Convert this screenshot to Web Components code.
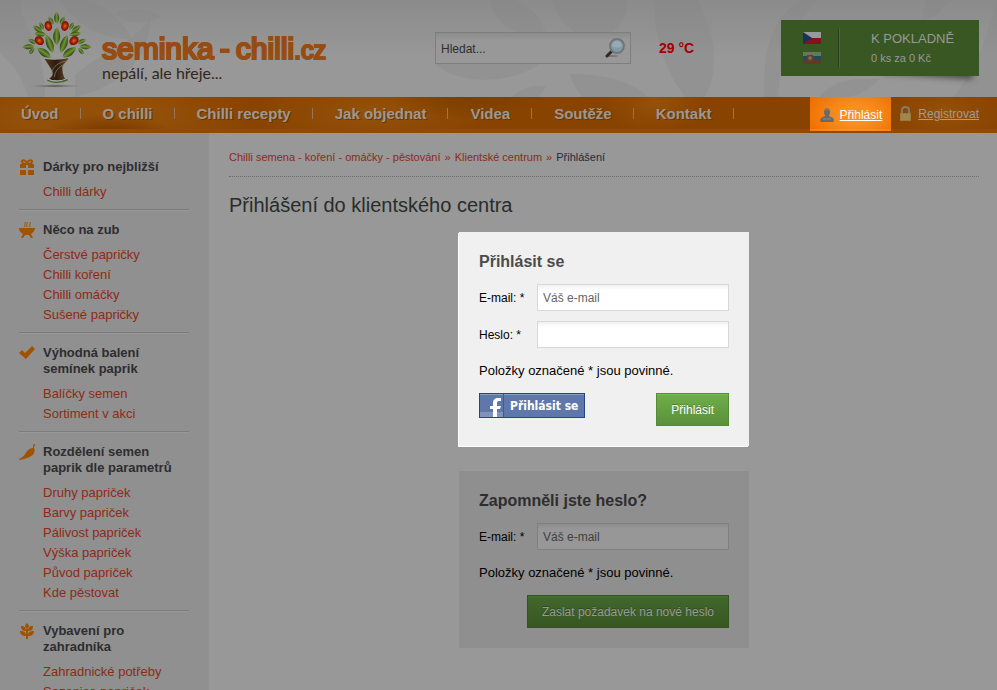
<!DOCTYPE html>
<html lang="cs">
<head>
<meta charset="utf-8">
<title>Přihlášení - seminka-chilli.cz</title>
<style>
	:root{
		--page: #989898;
		--side: #909090;
		--orange: #984f00;
		--link: #8f2a14;
		--text: #2e2e2e;
		--muted: #999;
	}
	body{
		margin: 0;
		background: var(--page);
		color: var(--text);
		font: 12px/16px "Liberation Sans", Arial, sans-serif;
	}
	.columns{
		display: flex;
		align-items: stretch;
	}
</style>
</head>
<body>

<shop-header></shop-header>
<shop-nav>
	<a href="#uvod">Úvod</a>
	<a href="#o-chilli">O chilli</a>
	<a href="#recepty">Chilli recepty</a>
	<a href="#objednat">Jak objednat</a>
	<a href="#videa">Videa</a>
	<a href="#souteze">Soutěže</a>
	<a href="#kontakt">Kontakt</a>
</shop-nav>

<div class="columns">
	<shop-sidebar>
		<menu-group icon="gift" heading="Dárky pro nejbližší">
			<a href="#1">Chilli dárky</a>
		</menu-group>
		<menu-group icon="bowl" heading="Něco na zub">
			<a href="#2">Čerstvé papričky</a>
			<a href="#3">Chilli koření</a>
			<a href="#4">Chilli omáčky</a>
			<a href="#5">Sušené papričky</a>
		</menu-group>
		<menu-group icon="check" heading="Výhodná balení semínek paprik">
			<a href="#6">Balíčky semen</a>
			<a href="#7">Sortiment v akci</a>
		</menu-group>
		<menu-group icon="pepper" heading="Rozdělení semen paprik dle parametrů">
			<a href="#8">Druhy papriček</a>
			<a href="#9">Barvy papriček</a>
			<a href="#10">Pálivost papriček</a>
			<a href="#11">Výška papriček</a>
			<a href="#12">Původ papriček</a>
			<a href="#13">Kde pěstovat</a>
		</menu-group>
		<menu-group icon="plant" heading="Vybavení pro zahradníka">
			<a href="#14">Zahradnické potřeby</a>
			<a href="#15">Sazenice papriček</a>
		</menu-group>
	</shop-sidebar>

	<page-content heading="Přihlášení do klientského centra">
		<bread-crumbs slot="crumbs">
			<a href="#home">Chilli semena - koření - omáčky - pěstování</a>
			<a href="#centrum">Klientské centrum</a>
			<span slot="current">Přihlášení</span>
		</bread-crumbs>
		<form-panel heading="Přihlásit se" active>
			<text-field label="E-mail: *" type="email" placeholder="Váš e-mail"></text-field>
			<text-field label="Heslo: *" type="password"></text-field>
			<facebook-button slot="actions">Přihlásit se</facebook-button>
			<green-button slot="actions">Přihlásit</green-button>
		</form-panel>
		<form-panel heading="Zapomněli jste heslo?">
			<text-field label="E-mail: *" type="email" placeholder="Váš e-mail"></text-field>
			<green-button slot="actions">Zaslat požadavek na nové heslo</green-button>
		</form-panel>
	</page-content>
</div>

<template id="shop-header">
	<style>
		:host{
			display: block;
			position: relative;
			isolation: isolate;
			background: linear-gradient(#8b8b8b, #989898 60%);
		}
		.backdrop{
			position: absolute;
			inset: 0;
			width: 100%;
			height: 100%;
			z-index: -1;
		}
		header{
			display: flex;
			align-items: center;
			min-height: 97px;
			padding: 0 18px 1px 22px;
			box-sizing: border-box;
		}
		.logo{
			display: flex;
			align-items: center;
			gap: 10px;
			flex: 0 0 413px;
			color: #34261a;
			text-decoration: none;
		}
		.logo svg{ width: 70px; height: 80px }
		.words{
			display: flex;
			flex-direction: column;
			padding-top: 18px;
		}
		.name{
			display: flex;
			gap: 6px;
			align-items: baseline;
			font-size: 30px;
			line-height: 30px;
			color: transparent;
			background: linear-gradient(#963a08 20%, #9b6226 90%);
			-webkit-background-clip: text;
			background-clip: text;
			-webkit-text-stroke: 2px #974c13;
		}
		.name small{ font-size: 25px }
		.tagline{
			font: 16px/16px Lato, sans-serif;
		}
		form{
			display: flex;
			align-items: center;
			width: 196px;
			height: 32px;
			box-sizing: border-box;
			border: 1px solid #7e7e7e;
			background: linear-gradient(#8b8b8b, #989898 7px);
		}
		input{
			flex: 1;
			min-width: 0;
			border: 0;
			padding: 2px 5px 0;
			background: none;
			font: inherit;
			color: var(--text);
		}
		input::placeholder{ color: var(--text); opacity: 1 }
		form button{
			border: 0;
			padding: 0 5px 0 0;
			background: none;
			height: 20px;
		}
		.temp{
			margin-left: 28px;
			font-size: 14px;
			color: #a50000;
		}
		.cart{
			display: flex;
			align-items: center;
			position: relative;
			width: 198px;
			height: 56px;
			margin-left: auto;
			box-sizing: border-box;
			padding-left: 22px;
			background: #385723;
		}
		.cart::after{
			content: "";
			position: absolute;
			right: 6px;
			bottom: 4px;
			width: 90px;
			height: 10px;
			z-index: -1;
			transform: rotate(4deg);
			box-shadow: 0 4px 6px #444;
		}
		.flags{
			display: flex;
			flex-direction: column;
			gap: 8px;
			padding-right: 17px;
		}
		.flags a, .flags svg{ display: block }
		.sum{
			display: flex;
			flex-direction: column;
			justify-content: center;
			gap: 3px;
			height: 40px;
			padding-left: 32px;
			border-left: 1px solid #29411a;
			box-shadow: inset 1px 0 #4c6a39;
			color: var(--muted);
			text-decoration: none;
			font-size: 11px;
		}
		.sum b{ font-size: 13px; font-weight: normal }
	</style>
	<svg class="backdrop" viewBox="0 0 997 97" preserveAspectRatio="xMidYMin slice" fill="#858585" fill-opacity=".28" aria-hidden="true">
		<path d="M0 0h20c0 30 25 38 25 97H28C18 60 0 60 0 50z"/>
		<path d="M60 0c20 30 40 36 72 40-10-22-30-38-50-40z"/>
		<path d="M115 14c12-8 34-6 46 2-12 8-34 10-46-2z"/>
		<path d="M75 75c20-20 50-25 75-55 0 35-25 65-75 77z"/>
		<path d="M490 0c4 22 20 36 56 38C545 20 530 4 510 0z"/>
		<path d="M552 0c5 18 16 30 34 38 20 0 42-8 41-38z"/>
		<path d="M435 64c25 22 75 20 105 0z"/>
		<path d="M512 97c8-8 18-12 34-11-3 5-5 8-8 11z"/>
		<path d="M570 74c30 0 62 6 78 23h-66c-6-8-10-14-12-23z"/>
		<path d="M655 0h42c18 30 24 66 8 97h-20c-22-30-32-62-30-97z"/>
		<path d="M800 0c-35 25-36 60-36 97h14c2-35 12-70 40-97z"/>
		<path d="M926 0h25c-10 10-18 20-30 20zM997 0c-10 30-14 60-44 97h44z"/>
		<path d="M820 97c10-15 35-20 60-18-10 10-20 16-32 18z"/>
	</svg>
	<header>
		<a class="logo" href="#home">
			<svg viewBox="20 9 210 240" aria-hidden="true">
				<defs>
					<linearGradient id="leaf"><stop stop-color="#263f0b"/><stop offset=".5" stop-color="#6e9136"/><stop offset="1" stop-color="#304b0c"/></linearGradient>
					<radialGradient id="fruit"><stop stop-color="#c77817"/><stop offset=".5" stop-color="#b52305"/><stop offset="1" stop-color="#720b05"/></radialGradient>
					<linearGradient id="trunk"><stop stop-color="#50351c"/><stop offset=".5" stop-color="#2c1b0e"/><stop offset="1" stop-color="#6a4829"/></linearGradient>
					<radialGradient id="ground"><stop stop-color="#444"/><stop offset="1" stop-color="#777" stop-opacity="0"/></radialGradient>
					<path id="l" d="M0-18C10-6 10 8 0 18-10 8-10-6 0-18z"/>
				</defs>
				<ellipse cx="118" cy="243" rx="78" ry="5" fill="url(#ground)"/>
				<g fill="url(#leaf)">
					<use href="#l" transform="translate(124 38)"/>
					<use href="#l" transform="translate(107 47) rotate(-32) scale(.75)"/>
					<use href="#l" transform="translate(141 47) rotate(32) scale(.75)"/>
					<use href="#l" transform="translate(79 63) rotate(-28) scale(.7)"/>
					<use href="#l" transform="translate(169 63) rotate(28) scale(.7)"/>
					<use href="#l" transform="translate(67 72) rotate(-55) scale(.9)"/>
					<use href="#l" transform="translate(183 71) rotate(55) scale(.9)"/>
					<use href="#l" transform="translate(75 87) rotate(-82)"/>
					<use href="#l" transform="translate(179 87) rotate(82)"/>
					<use href="#l" transform="translate(51 109) rotate(-65) scale(.8)"/>
					<use href="#l" transform="translate(199 109) rotate(65) scale(.8)"/>
					<use href="#l" transform="translate(39 125) rotate(-92)"/>
					<use href="#l" transform="translate(210 125) rotate(92)"/>
					<use href="#l" transform="translate(49 138) rotate(42) scale(.7)"/>
					<use href="#l" transform="translate(197 138) rotate(-42) scale(.7)"/>
					<use href="#l" transform="translate(124 94) scale(1.4 1.5)"/>
					<use href="#l" transform="translate(103 116) rotate(-20) scale(1.4 1.6)"/>
					<use href="#l" transform="translate(146 116) rotate(20) scale(1.4 1.6)"/>
					<use href="#l" transform="translate(86 143) rotate(-54) scale(1.4)"/>
					<use href="#l" transform="translate(162 142) rotate(54) scale(1.4)"/>
				</g>
				<g fill="url(#fruit)">
					<ellipse cx="99" cy="63" rx="11" ry="15" transform="rotate(-15 99 63)"/>
					<ellipse cx="149" cy="63" rx="11" ry="15" transform="rotate(15 149 63)"/>
					<ellipse cx="72" cy="107" rx="12" ry="15" transform="rotate(-50 72 107)"/>
					<ellipse cx="176" cy="107" rx="12" ry="15" transform="rotate(50 176 107)"/>
				</g>
				<path d="M88 161c20 4 48 5 71-2-3 13-19 17-18 32 0 14 4 27 13 35-16 4-38 3-54-3 11-9 15-16 10-26-4-11-16-24-22-36z" fill="url(#trunk)"/>
				<path d="M156 168c-25 3-42 14-49 38M148 178c-21 8-28 22-31 38" fill="none" stroke="#8f897e" stroke-width="2"/>
				<path d="M98 222c12 8 40 8 54 0" fill="none" stroke="#a9a9a0" stroke-width="4"/>
				<path d="M96 225c14 10 45 9 61-1" fill="none" stroke="#45612b" stroke-width="4"/>
			</svg>
			<span class="words">
				<span class="name"><span>seminka</span><span>-</span><span>chilli<small>.cz</small></span></span>
				<span class="tagline">nepálí, ale hřeje...</span>
			</span>
		</a>
		<form role="search">
			<input type="text" placeholder="Hledat..." aria-label="Hledat">
			<button type="button" aria-label="Vyhledat">
				<svg width="20" height="20" viewBox="0 0 20 20">
					<ellipse cx="7" cy="18" rx="6" ry="1" fill="#777"/>
					<path d="M7 13l-5 5" stroke="#292929" stroke-width="3" stroke-linecap="round"/>
					<circle cx="12" cy="8" r="7" fill="#829aa7" stroke="#717578" stroke-width="2"/>
					<path d="M7 8a5 5 0 0 1 10 0c-3 2-7 2-10 0z" fill="#95aab3"/>
				</svg>
			</button>
		</form>
		<strong class="temp">29 °C</strong>
		<div class="cart">
			<div class="flags">
				<a href="#cz" aria-label="Česky"><svg width="18" height="12" viewBox="0 0 18 12"><path fill="#999" d="M0 0h18v6H0z"/><path fill="#87101a" d="M0 6h18v6H0z"/><path fill="#15315e" d="M0 0l9 6-9 6z"/></svg></a>
				<a href="#sk" aria-label="Slovensky"><svg width="18" height="12" viewBox="0 0 18 12"><path fill="#64795a" d="M0 0h18v4H0z"/><path fill="#224a58" d="M0 4h18v4H0z"/><path fill="#5e3b24" d="M0 8h18v4H0z"/><path fill="#6b3b25" d="M4 3h6v4c0 2-2 3-3 3S4 9 4 7z"/><path stroke="#8b8068" d="M7 4v4M5 6h4"/></svg></a>
			</div>
			<a class="sum" href="#kosik"><b>K POKLADNĚ</b><span>0 ks za 0 Kč</span></a>
		</div>
	</header>
</template>

<template id="shop-nav">
	<style>
		:host{ display: block }
		nav{
			display: flex;
			align-items: center;
			height: 32px;
			padding-right: 18px;
			border-bottom: 4px solid #914b00;
			background:
				radial-gradient(ellipse 90px 30px at 110px 40px, #7f3d00 30%, transparent 75%),
				radial-gradient(ellipse 170px 50px at 90px 20px, #935009 40%, transparent),
				radial-gradient(ellipse 80px 22px at 470px 0, #7b4000 10%, transparent),
				radial-gradient(ellipse 120px 40px at 370px 16px, #935009 10%, transparent),
				radial-gradient(ellipse 50px 30px at 655px 6px, #935009 10%, transparent),
				radial-gradient(ellipse 60px 30px at 945px 16px, #935009 10%, transparent),
				#884300;
		}
		.items{
			display: flex;
			flex: 1;
			padding-top: 2px;
			font-size: 15px;
			font-weight: bold;
		}
		::slotted(a){
			padding: 0 22px;
			color: #9c9791;
			text-decoration: none;
			text-shadow: 1px 1px #6b3500;
			background: linear-gradient(#93765d, #93765d) right 2px / 1px 11px no-repeat;
		}
		::slotted(a:first-of-type){ padding-left: 21px }
		.user{
			display: flex;
			align-items: center;
			gap: 6px;
			height: 32px;
			box-sizing: border-box;
			padding: 2px 0 0 8px;
			color: #a59a90;
		}
		.login{
			height: 34px;
			margin-bottom: -2px;
			padding: 2px 9px 0 10px;
			color: #fff;
			background:
				linear-gradient(rgba(255,160,50,.35), rgba(255,160,50,.35)) bottom / 100% 2px no-repeat,
				radial-gradient(ellipse 50px 30px at 45px 18px, #fb8f1e 30%, transparent),
				#ef7000;
		}
	</style>
	<nav>
		<div class="items"><slot></slot></div>
		<a class="user login" href="#prihlasit">
			<svg width="14" height="14" viewBox="0 0 14 14" aria-hidden="true"><path d="M4 4c0-5 6-5 6 0 0 2-1 3-1 4l4 2c1 1 1 4 0 4H1c-1 0-1-3 0-4l4-2c0-1-1-2-1-4z" fill="#666a6c"/><path d="M5 3c1-2 3-2 4 0M3 11h8" stroke="#84888a" fill="none"/></svg>
			<span>Přihlásit</span>
		</a>
		<a class="user" href="#registrovat">
			<svg width="13" height="16" viewBox="0 0 13 16" aria-hidden="true"><path d="M3 8V4c0-4 7-4 7 0v4" fill="none" stroke="#837b70" stroke-width="2"/><path d="M1 7h11v8H1z" fill="#9a7b3e"/><path d="M2 9h9M2 11h9M2 13h9" stroke="#a89260"/></svg>
			<span>Registrovat</span>
		</a>
	</nav>
</template>

<template id="shop-sidebar">
	<style>
		:host{
			display: block;
			flex: 0 0 209px;
			box-sizing: border-box;
			padding: 13px 20px 0 19px;
			background: var(--side);
		}
		::slotted(menu-group:not(:first-child)){
			border-top: 1px solid #7c7c7c;
			box-shadow: inset 0 1px #989898;
		}
	</style>
	<slot></slot>
</template>

<template id="menu-group">
	<style>
		:host{
			display: grid;
			grid-template-columns: 16px 1fr;
			column-gap: 8px;
			row-gap: 7px;
			padding: 12px 0 7px;
			font-size: 13px;
		}
		:host(:first-child){ padding-top: 13px }
		svg{ fill: #a05200 }
		h3{
			margin: 0;
			font-size: 13px;
			line-height: 16px;
			color: #2d2d2f;
		}
		nav{
			grid-column: 2;
			display: flex;
			flex-direction: column;
			line-height: 20px;
		}
		::slotted(a){ color: var(--link); text-decoration: none }
	</style>
	<svg width="16" height="16" viewBox="0 0 16 16" aria-hidden="true"></svg>
	<h3></h3>
	<nav><slot></slot></nav>
</template>

<template id="page-content">
	<style>
		:host{
			display: block;
			flex: 1;
			min-width: 0;
			padding: 16px 18px 20px 20px;
		}
		h1{
			margin: 16px 0 15px;
			font-size: 20px;
			line-height: 24px;
			font-weight: normal;
			color: #292c2b;
		}
		.panels{
			display: flex;
			flex-direction: column;
			align-items: center;
			gap: 25px;
		}
	</style>
	<main>
		<slot name="crumbs"></slot>
		<h1></h1>
		<div class="panels"><slot></slot></div>
	</main>
</template>

<template id="bread-crumbs">
	<style>
		:host{
			display: block;
			padding-bottom: 11px;
			border-bottom: 1px dotted #6b6b6b;
			font-size: 11px;
			color: #232b3a;
		}
		nav{ display: flex }
		::slotted(a){ color: var(--link); text-decoration: none }
		::slotted(a)::after{
			content: "»";
			padding: 0 4px;
		}
	</style>
	<nav aria-label="Drobečková navigace"><slot></slot><slot name="current"></slot></nav>
</template>

<template id="form-panel">
	<style>
		:host{
			display: block;
			width: 290px;
			max-width: 100%;
			box-sizing: border-box;
			padding: 20px;
			background: #8f8f8f;
			color: #000;
			--field: #979797;
			--field-top: #8b8b8b;
			--field-line: #808080;
			--hint: #404040;
			--btn-top: #42682c;
			--btn-bottom: #375622;
			--btn-edge: #4a7531;
			--btn-line: #355222;
			--btn-text: #999;
		}
		:host([active]){
			background: #f0f0f0;
			box-shadow: -1px 1px #fff;
			--field: #fff;
			--field-top: #f0f0f0;
			--field-line: #d8d8d8;
			--hint: #666;
			--btn-top: #6fae49;
			--btn-bottom: #5b903a;
			--btn-edge: #7cbd53;
			--btn-line: #568a37;
			--btn-text: #fff;
		}
		h2{
			margin: 0 0 12px;
			font-size: 16px;
			line-height: 20px;
			color: #2e2e2e;
		}
		:host([active]) h2{ color: #4c4c4c }
		.fields{
			display: flex;
			flex-direction: column;
			gap: 10px;
		}
		p{
			margin: 13px 0 12px;
			font-size: 13px;
			line-height: 20px;
		}
		.actions{
			display: flex;
			align-items: flex-start;
			justify-content: space-between;
		}
		::slotted(green-button){ margin-left: auto }
	</style>
	<form>
		<h2></h2>
		<div class="fields"><slot></slot></div>
		<p>Položky označené * jsou povinné.</p>
		<div class="actions"><slot name="actions"></slot></div>
	</form>
</template>

<template id="text-field">
	<style>
		:host{
			display: flex;
			align-items: center;
		}
		label{ flex: 0 0 58px }
		input{
			flex: 1;
			min-width: 0;
			height: 27px;
			box-sizing: border-box;
			padding: 0 5px;
			border: 1px solid var(--field-line);
			border-radius: 0;
			background: linear-gradient(var(--field-top), var(--field) 5px);
			font: inherit;
		}
		input::placeholder{ color: var(--hint); opacity: 1 }
	</style>
	<label for="input"></label>
	<input id="input">
</template>

<template id="green-button">
	<style>
		:host{ display: block }
		button{
			height: 33px;
			padding: 0 14px;
			border: 1px solid var(--btn-line);
			box-shadow: inset 0 1px var(--btn-edge);
			background: linear-gradient(var(--btn-top), var(--btn-bottom));
			color: var(--btn-text);
			font: inherit;
			text-shadow: 0 -1px rgba(0,0,0,.25);
		}
	</style>
	<button type="button"><slot></slot></button>
</template>

<template id="facebook-button">
	<style>
		:host{ display: block }
		button{
			display: flex;
			align-items: center;
			height: 25px;
			padding: 0 6px 0 0;
			border: 1px solid #29447e;
			background: #5f78ab;
			box-shadow: inset 0 1px #8a9cc2;
			color: #fff;
			font: bold 12px/16px "DejaVu Sans Condensed", "DejaVu Sans", sans-serif;
		}
		svg{ margin-right: 6px }
	</style>
	<button type="button">
		<svg width="24" height="23" viewBox="0 0 24 23" aria-hidden="true"><path fill="#7f93bc" d="M0 18h23v5H0z"/><path fill="#3f5a94" d="M23 0h1v23h-1z"/><path fill="#fff" d="M13 23v-8h-3v-3h3V9c0-3 2-5 5-5h3v3h-2c-2 0-2 1-2 2v3h4l-1 3h-3v8z"/></svg>
		<slot></slot>
	</button>
</template>

<script>
const ICONS = {
	gift: '<path d="M1 5h6v4H1zM9 5h6v4H9zM1 11h6v5H1zM9 11h6v5H9z"/><path d="M8 5C5 5 3 4 3 2.500S6 0 8 4c2-4 5-3 5-1.500S11 5 8 5z" fill="none" stroke="#a05200" stroke-width="2"/>',
	bowl: '<path d="M0 6h16v1c-1 3-3 4-4 5l2 4h-2l-2-3H6l-2 3H2l2-4C2 11 0 9 0 6z"/><path d="M6 0c1 2-1 2 0 5M8 0c1 2-1 2 0 5M11 0c1 2-1 2 0 5" fill="none" stroke="#a05200"/>',
	check: '<path d="M0 8l3-3 3 3 7-7 3 3-9 10z"/>',
	pepper: '<path d="M15 0h1c0 2-1 2-1 4 3 6-5 11-15 12v-1c5-2 6-5 8-8 2-2 4-3 6-3 0-2 0-3 1-4z"/>',
	plant: '<path d="M8 0c3 3 2 4 0 6-2-2-3-3 0-6z"/><path d="M2 3c4 0 5 2 5 5-3 0-5-1-5-5zM14 3c-4 0-5 2-5 5 3 0 5-1 5-5zM1 8c4 0 6 1 6 5-4 0-6-2-6-5zM15 8c-4 0-6 1-6 5 4 0 6-2 6-5z"/><path d="M7 6h2v10H7z"/>'
}

class ShopElement extends HTMLElement{
	constructor(){
		super()
		let temp = document.getElementById(this.localName)
		this.attachShadow({mode: "open"}).appendChild(document.importNode(temp.content, true))
	}
	find(selector){
		return this.shadowRoot.querySelector(selector)
	}
}

// any element with a heading attribute puts it in its first heading tag
class HeadedElement extends ShopElement{
	connectedCallback(){
		this.find("h1, h2, h3").textContent = this.getAttribute("heading")
	}
}

class MenuGroup extends HeadedElement{
	connectedCallback(){
		super.connectedCallback()
		this.find("svg").innerHTML = ICONS[this.getAttribute("icon")] || ""
	}
}

class TextField extends ShopElement{
	connectedCallback(){
		let input = this.find("input")
		this.find("label").textContent = this.getAttribute("label")
		input.type = this.getAttribute("type") || "text"
		input.placeholder = this.getAttribute("placeholder") || ""
	}
}

customElements.define("shop-header", class extends ShopElement{})
customElements.define("shop-nav", class extends ShopElement{})
customElements.define("shop-sidebar", class extends ShopElement{})
customElements.define("menu-group", MenuGroup)
customElements.define("page-content", class extends HeadedElement{})
customElements.define("bread-crumbs", class extends ShopElement{})
customElements.define("form-panel", class extends HeadedElement{})
customElements.define("text-field", TextField)
customElements.define("green-button", class extends ShopElement{})
customElements.define("facebook-button", class extends ShopElement{})
</script>
</body>
</html>
